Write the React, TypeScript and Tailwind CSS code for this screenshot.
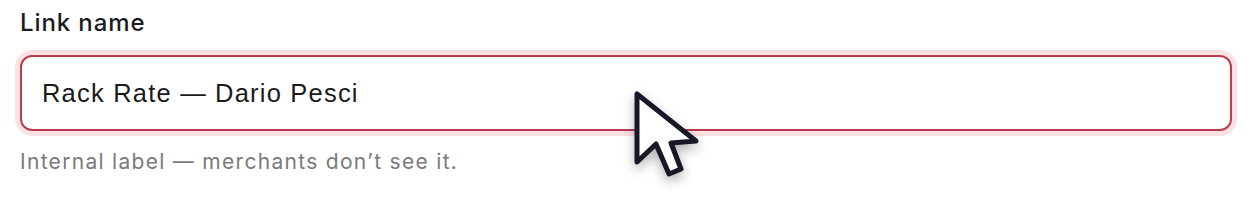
export default function App() {
  return (
    <main className="relative h-[216px] w-[1260px] overflow-hidden bg-white">
      <section className="flex flex-col pl-5 pt-[7px]">
        {/* Label */}
        <label className="font-['Inter',sans-serif] text-[24px] font-medium leading-[32px] tracking-[0.9px] text-[#1c1c1e]">
          Link name
        </label>

        {/* Field */}
        <div className="mt-4 flex h-[76px] w-[1212px] items-center rounded-[12px] border-2 border-[#bb3a4c] px-5 shadow-[0_0_0_5px_#fde1e3]">
          <span className="font-['Liberation_Sans',Arial,sans-serif] text-[25.5px] tracking-[1.2px] text-[#1a1a1a]">
            Rack Rate — Dario Pesci
          </span>
        </div>

        {/* Hint */}
        <p className="mt-[17px] font-['Inter',sans-serif] text-[21px] leading-[28px] tracking-[1.3px] text-[#7a7a7a]">
          Internal label — merchants don’t see it.
        </p>
      </section>

      {/* Cursor */}
      <svg
        className="absolute left-[628px] top-[84px] h-[100px] w-[80px] drop-shadow-[0_5px_6px_rgba(0,0,0,0.3)]"
        viewBox="0 0 80 100"
      >
        <path
          d="M9 10 L9 78 L28 60 L41 90 L53 85 L43 59 L68 57 Z"
          fill="#ffffff"
          stroke="#161827"
          strokeWidth="5"
          strokeLinejoin="round"
        />
      </svg>
    </main>
  );
}
